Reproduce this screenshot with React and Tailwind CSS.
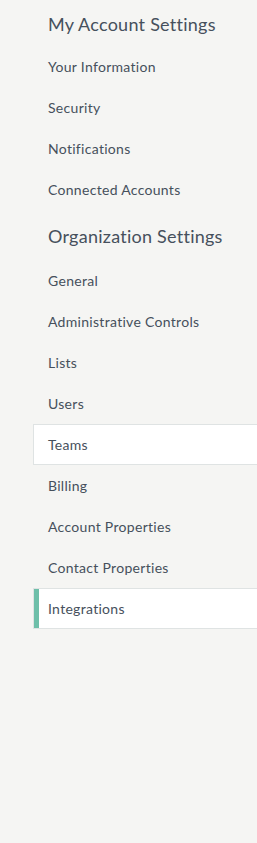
import React from 'react';

const accountItems = ['Your Information', 'Security', 'Notifications', 'Connected Accounts'];
const orgItems = [
  'General',
  'Administrative Controls',
  'Lists',
  'Users',
  'Teams',
  'Billing',
  'Account Properties',
  'Contact Properties',
  'Integrations',
];

function NavItem({ label, hovered, active }) {
  let cls = 'border-transparent';
  if (hovered) cls = 'bg-white border-[#dfe3e3] border-r-0';
  if (active) cls = 'bg-white border-[#dfe3e3] border-r-0 shadow-[inset_5px_0_0_#6ebfa9]';
  return (
    <li className={`h-[41px] flex items-center pl-[14px] border text-[14px] tracking-[0.3px] text-[#46505c] ${cls}`}>
      {label}
    </li>
  );
}

export default function App() {
  return (
    <div
      className="w-[257px] h-[843px] bg-[#f5f5f3] overflow-hidden pl-[33px]"
      style={{ fontFamily: 'Lato, "Open Sans", sans-serif' }}
    >
      <h2 className="h-[46px] flex items-center pl-[15px] pt-[2px] text-[18px] tracking-[0.25px] text-[#46505c]">My Account Settings</h2>
      <ul>
        {accountItems.map((l) => (
          <NavItem key={l} label={l} />
        ))}
      </ul>
      <h2 className="h-[50px] flex items-center pl-[15px] pt-[2px] text-[18px] tracking-[0.25px] text-[#46505c]">Organization Settings</h2>
      <ul className="w-[260px]">
        {orgItems.map((l) => (
          <NavItem key={l} label={l} hovered={l === 'Teams'} active={l === 'Integrations'} />
        ))}
      </ul>
    </div>
  );
}
